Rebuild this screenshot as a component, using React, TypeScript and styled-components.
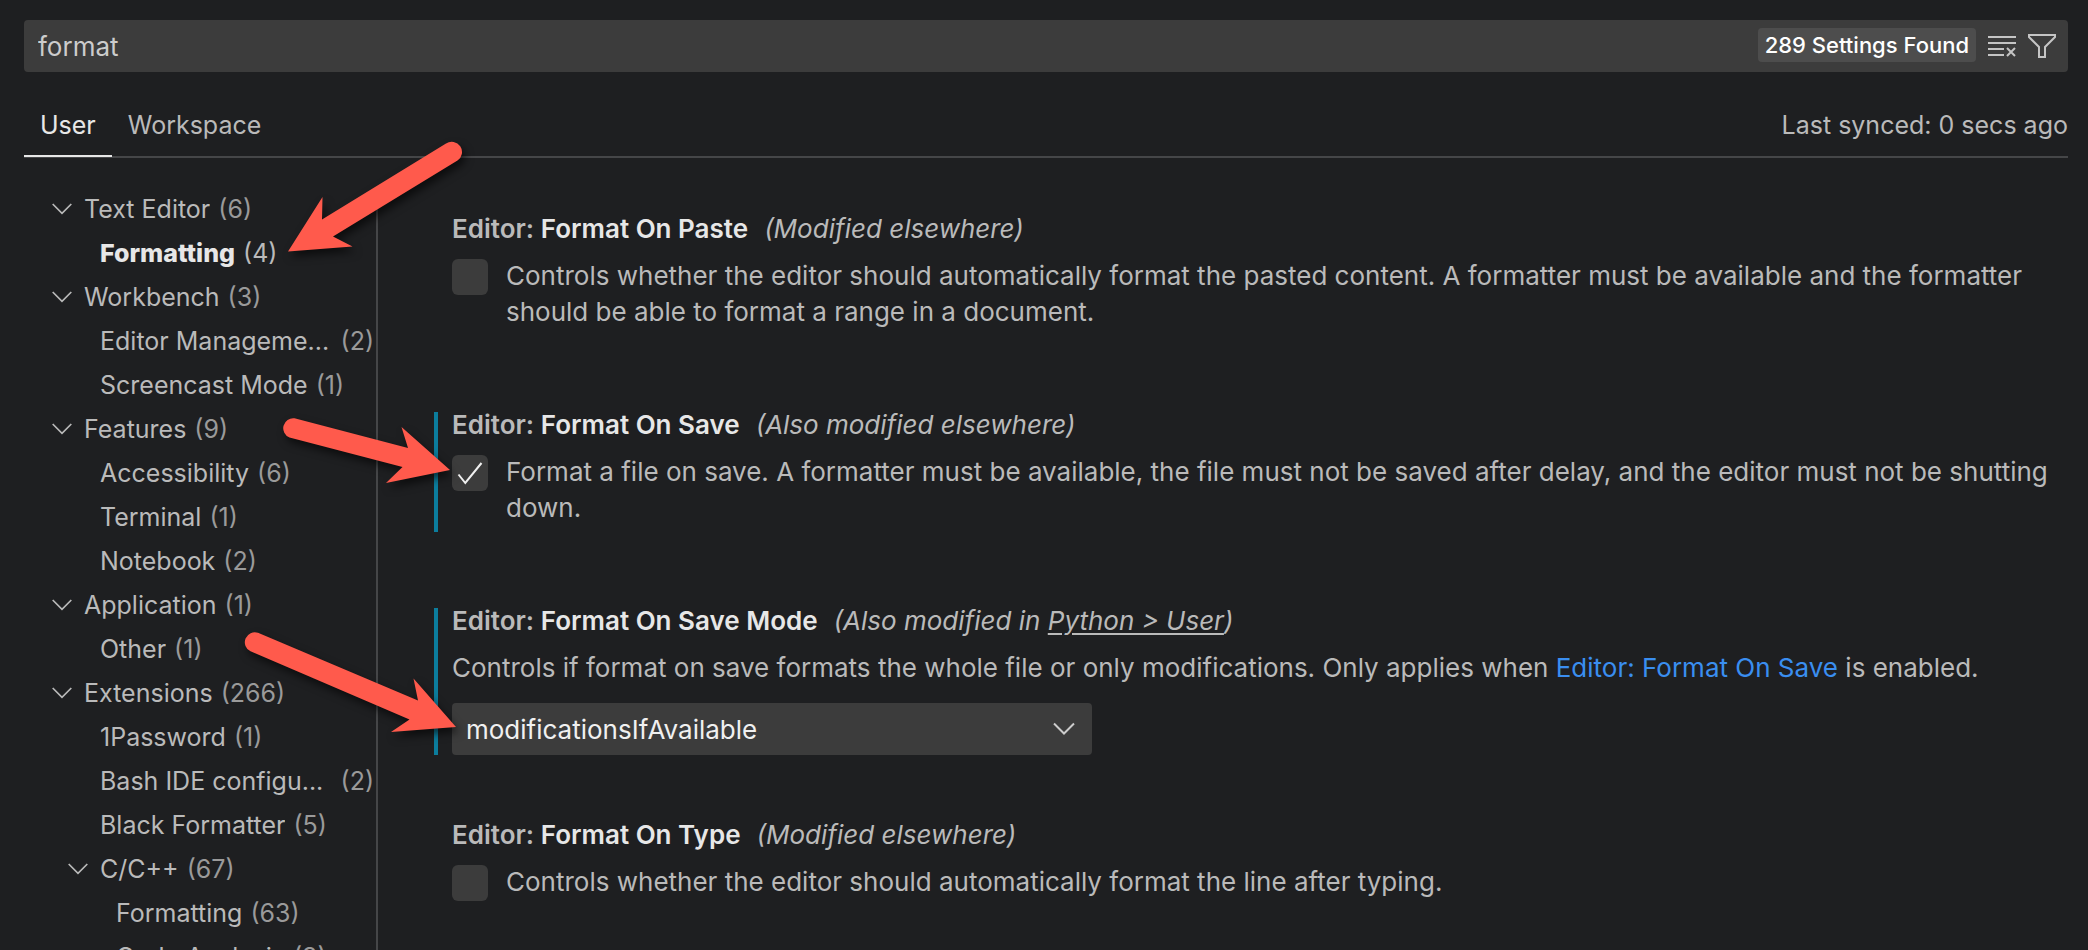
import React, { useState } from "react";
import styled, { createGlobalStyle } from "styled-components";

const color = {
  page: "#1e1f21",
  control: "#3c3c3c",
  badge: "#4d4d4d",
  line: "#454648",
  text: "#bababa",
  strong: "#e7e7e7",
  muted: "#9a9a9a",
  link: "#3a8ef0",
  modified: "#0c7d9d",
  arrow: "#ff5a4c",
};

const GlobalStyle = createGlobalStyle`
  * { box-sizing: border-box; }
  body {
    margin: 0;
    background: ${color.page};
    color: ${color.text};
    font-family: Inter, "Liberation Sans", sans-serif;
    font-size: 26px;
  }
  button, input, select { font: inherit; color: inherit; }
`;

const Page = styled.div`
  position: relative;
  display: flex;
  flex-direction: column;
  height: 100vh;
  overflow: hidden;
  padding: 20px 20px 0 24px;
`;

const SearchBar = styled.div`
  display: flex;
  flex: none;
  align-items: center;
  height: 52px;
  padding-right: 12px;
  border-radius: 4px;
  background: ${color.control};
`;

const SearchInput = styled.input`
  flex: 1;
  min-width: 0;
  height: 52px;
  padding: 0 14px;
  border: 0;
  outline: 0;
  background: none;
  color: #cccccc;
`;

const Badge = styled.span`
  margin: 0 12px 2px 0;
  padding: 0 7px;
  border-radius: 4px;
  background: ${color.badge};
  color: #ffffff;
  font-size: 22px;
  font-weight: 500;
  line-height: 34px;
  white-space: nowrap;
`;

const IconButton = styled.button`
  display: flex;
  margin: 0 0 0 12px;
  padding: 0;
  border: 0;
  background: none;
  &:first-of-type { margin-left: 0; }
`;

const TabBar = styled.div`
  display: flex;
  flex: none;
  align-items: flex-end;
  justify-content: space-between;
  height: 86px;
  border-bottom: 2px solid ${color.line};
  font-size: 25px;
`;

const Tabs = styled.div`
  display: flex;
`;

const Tab = styled.button<{ $active?: boolean }>`
  height: 58px;
  margin-bottom: -1px;
  padding: 0 16px 4px;
  border: 0;
  border-bottom: 2px solid ${(p) => (p.$active ? color.strong : "transparent")};
  background: none;
  color: ${(p) => (p.$active ? color.strong : color.text)};
`;

const SyncStatus = styled.span`
  padding-bottom: 15px;
  line-height: 32px;
`;

const Body = styled.div`
  display: flex;
  flex: 1;
  min-height: 0;
  padding-top: 29px;
`;

const Tree = styled.nav`
  flex: none;
  width: 354px;
  overflow: hidden;
  border-right: 2px solid ${color.line};
  font-size: 25px;
`;

const TreeRow = styled.button<{ $depth: number; $active?: boolean }>`
  display: flex;
  align-items: center;
  width: 100%;
  height: 44px;
  padding: 0 2px 0 ${(p) => 20 + p.$depth * 16}px;
  border: 0;
  background: none;
  text-align: left;
  white-space: nowrap;
  color: ${(p) => (p.$active ? color.strong : color.text)};
  font-weight: ${(p) => (p.$active ? 800 : 400)};
`;

const Twistie = styled.span`
  display: flex;
  flex: none;
  width: 40px;
  padding-left: 8px;
`;

const TreeLabel = styled.span<{ $fill?: boolean }>`
  flex: ${(p) => (p.$fill ? "1" : "0 1 auto")};
  overflow: hidden;
  text-overflow: ellipsis;
`;

const Count = styled.span<{ $active?: boolean }>`
  padding-left: 8px;
  color: ${(p) => (p.$active ? color.text : color.muted)};
  font-weight: 400;
`;

const Settings = styled.main`
  flex: 1;
  min-width: 0;
  padding: 29px 8px 0 56px;
`;

const Setting = styled.section<{ $modified?: boolean; $gap: number }>`
  margin-bottom: ${(p) => p.$gap}px;
  padding-left: 14px;
  border-left: 4px solid ${(p) => (p.$modified ? color.modified : "transparent")};
`;

const Title = styled.h2`
  margin: 0 0 16px;
  font-size: 26px;
  font-weight: 600;
  line-height: 26px;
`;

const Name = styled.span`
  color: ${color.strong};
`;

const Scope = styled.em`
  margin-left: 16px;
  font-weight: 400;
  a { color: inherit; text-underline-offset: 3px; }
`;

const CheckRow = styled.div`
  display: flex;
  padding-bottom: 6px;
`;

const CheckHolder = styled.span`
  display: grid;
  flex: none;
  width: 36px;
  height: 36px;
  margin: 1px 18px 0 0;
  svg { grid-area: 1 / 1; place-self: center; pointer-events: none; }
`;

const CheckBox = styled.input`
  grid-area: 1 / 1;
  width: 36px;
  height: 36px;
  margin: 0;
  appearance: none;
  border-radius: 6px;
  background: ${color.control};
`;

const Description = styled.p`
  margin: 0;
  line-height: 36px;
  a { color: ${color.link}; text-decoration: none; }
`;

const SelectHolder = styled.div`
  display: grid;
  align-items: center;
  max-width: 640px;
  margin-top: 17px;
  svg { grid-area: 1 / 1; justify-self: end; margin-right: 17px; pointer-events: none; }
`;

const Select = styled.select`
  grid-area: 1 / 1;
  height: 52px;
  padding: 0 14px;
  appearance: none;
  border: 0;
  border-radius: 4px;
  background: ${color.control};
  color: #f0f0f0;
`;

const Annotations = styled.svg`
  position: absolute;
  top: 0;
  left: 0;
  pointer-events: none;
  path {
    fill: ${color.arrow};
    filter: drop-shadow(3px 5px 4px rgba(0, 0, 0, 0.6));
  }
`;

const Chevron = () => (
  <svg width="20" height="12" viewBox="0 0 20 12" fill="none" stroke="currentColor" strokeWidth="1.7">
    <path d="M.7 1 10 10.300 19.300 1" />
  </svg>
);

const SelectChevron = () => (
  <svg width="22" height="14" viewBox="0 0 22 14" fill="none" stroke="#cccccc" strokeWidth="2">
    <path d="M1 1.500 11 11.500 21 1.500" />
  </svg>
);

const Check = () => (
  <svg width="26" height="24" viewBox="0 0 26 24" fill="none" stroke="#f0f0f0" strokeWidth="2">
    <path d="M1.500 13.500 8.300 22 24.500 2" />
  </svg>
);

const ClearIcon = () => (
  <svg width="28" height="28" viewBox="0 0 28 28" fill="none" stroke="#c5c5c5" strokeWidth="2">
    <path d="M0 5h28M0 11h28M0 17h16M0 23h16" />
    <path d="m19 16 8 8m0-8-8 8" />
  </svg>
);

const FilterIcon = () => (
  <svg width="28" height="28" viewBox="0 0 28 28" fill="none" stroke="#c5c5c5" strokeWidth="2">
    <path d="M1 3h26v2L17 15v10h-6V15L1 5z" />
  </svg>
);

type Node = { label: string; count: number; depth: number; open?: boolean; shortened?: boolean };

const nodes: Node[] = [
  { label: "Text Editor", count: 6, depth: 0, open: true },
  { label: "Formatting", count: 4, depth: 1 },
  { label: "Workbench", count: 3, depth: 0, open: true },
  { label: "Editor Manageme...", count: 2, depth: 1, shortened: true },
  { label: "Screencast Mode", count: 1, depth: 1 },
  { label: "Features", count: 9, depth: 0, open: true },
  { label: "Accessibility", count: 6, depth: 1 },
  { label: "Terminal", count: 1, depth: 1 },
  { label: "Notebook", count: 2, depth: 1 },
  { label: "Application", count: 1, depth: 0, open: true },
  { label: "Other", count: 1, depth: 1 },
  { label: "Extensions", count: 266, depth: 0, open: true },
  { label: "1Password", count: 1, depth: 1 },
  { label: "Bash IDE configu...", count: 2, depth: 1, shortened: true },
  { label: "Black Formatter", count: 5, depth: 1 },
  { label: "C/C++", count: 67, depth: 1, open: true },
  { label: "Formatting", count: 63, depth: 2 },
  { label: "Code Analysis", count: 3, depth: 2 },
];

type CheckSettingProps = {
  id: string;
  name: string;
  scope: string;
  text: string;
  initial?: boolean;
};

function CheckSetting({ id, name, scope, text, initial = false }: CheckSettingProps) {
  const [on, setOn] = useState(initial);
  return (
    <Setting $modified={initial} $gap={76}>
      <Title>
        Editor: <Name>{name}</Name>
        <Scope>({scope})</Scope>
      </Title>
      <CheckRow>
        <CheckHolder>
          <CheckBox id={id} type="checkbox" checked={on} onChange={(e) => setOn(e.target.checked)} />
          {on && <Check />}
        </CheckHolder>
        <Description as="label" htmlFor={id}>{text}</Description>
      </CheckRow>
    </Setting>
  );
}

export default function App() {
  const [query, setQuery] = useState("format");
  const [selected, setSelected] = useState(1);
  return (
    <Page>
      <GlobalStyle />
      <SearchBar>
        <SearchInput aria-label="Search settings" value={query} onChange={(e) => setQuery(e.target.value)} />
        <Badge>289 Settings Found</Badge>
        <IconButton aria-label="Clear Settings Search Input"><ClearIcon /></IconButton>
        <IconButton aria-label="Filter Settings"><FilterIcon /></IconButton>
      </SearchBar>
      <TabBar>
        <Tabs>
          <Tab $active>User</Tab>
          <Tab>Workspace</Tab>
        </Tabs>
        <SyncStatus>Last synced: 0 secs ago</SyncStatus>
      </TabBar>
      <Body>
        <Tree aria-label="Settings">
          {nodes.map((n, i) => (
            <TreeRow key={i} $depth={n.depth} $active={i === selected} onClick={() => setSelected(i)}>
              <Twistie>{n.open && <Chevron />}</Twistie>
              <TreeLabel $fill={n.shortened}>{n.label}</TreeLabel>
              <Count $active={i === selected}>({n.count})</Count>
            </TreeRow>
          ))}
        </Tree>
        <Settings>
          <CheckSetting
            id="format-on-paste"
            name="Format On Paste"
            scope="Modified elsewhere"
            text="Controls whether the editor should automatically format the pasted content. A formatter must be available and the formatter should be able to format a range in a document."
          />
          <CheckSetting
            id="format-on-save"
            name="Format On Save"
            scope="Also modified elsewhere"
            text="Format a file on save. A formatter must be available, the file must not be saved after delay, and the editor must not be shutting down."
            initial
          />
          <Setting $modified $gap={67}>
            <Title>
              Editor: <Name>Format On Save Mode</Name>
              <Scope>(Also modified in <a href="#python">Python &gt; User</a>)</Scope>
            </Title>
            <Description as="label" htmlFor="save-mode">
              Controls if format on save formats the whole file or only modifications. Only applies when{" "}
              <a href="#format-on-save">Editor: Format On Save</a> is enabled.
            </Description>
            <SelectHolder>
              <Select id="save-mode" defaultValue="modificationsIfAvailable">
                <option>file</option>
                <option>modifications</option>
                <option>modificationsIfAvailable</option>
              </Select>
              <SelectChevron />
            </SelectHolder>
          </Setting>
          <CheckSetting
            id="format-on-type"
            name="Format On Type"
            scope="Modified elsewhere"
            text="Controls whether the editor should automatically format the line after typing."
          />
        </Settings>
      </Body>
      <Annotations width="480" height="780" viewBox="0 0 480 780" aria-hidden="true">
        <path d="M288 251.500 322.500 197 322 219.500 446 143.500A10 10 0 0 1 457.500 160.500L333 236.500 352.500 246.500Z" />
        <path d="M450 470 401.500 427 408 448 294.500 418.300A10 10 0 0 0 289.500 437.500L402.500 467 386 483Z" />
        <path d="M456 727 413.500 678.500 418 700.500 258 632.800A10 10 0 0 0 250.500 651.300L409.500 719.500 391 732Z" />
      </Annotations>
    </Page>
  );
}
